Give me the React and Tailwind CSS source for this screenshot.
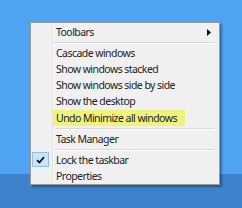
import React from 'react'

function Item({ children, arrow, checked, highlight }) {
  return (
    <div className="relative flex h-4 items-center">
      {checked && (
        <div className="absolute left-[1px] top-0 flex h-[15px] w-[17px] items-center justify-center border border-[#8fc0ea] bg-[#cde3f6]">
          <svg width="9" height="8" viewBox="0 0 9 8">
            <path d="M1 4.2 L3.4 6.5 L8 1.2" fill="none" stroke="#111" strokeWidth="1.8" />
          </svg>
        </div>
      )}
      <span
        className={
          highlight
            ? 'ml-[22px] pl-[3px] pr-[8px] bg-[#f1f27a] leading-[16px]'
            : 'ml-[25px] leading-[16px]'
        }
      >
        {children}
      </span>
      {arrow && (
        <svg className="absolute right-[8px] top-[5px]" width="4" height="7" viewBox="0 0 4 7">
          <path d="M0 0 L4 3.5 L0 7 Z" fill="#111" />
        </svg>
      )}
    </div>
  )
}

function Sep() {
  return (
    <div className="h-[5px] pl-[23px] pr-[4px] pt-[2px]">
      <div className="h-px bg-[#d9d9d9]" />
      <div className="h-px bg-white" />
    </div>
  )
}

export default function App() {
  return (
    <div className="relative flex h-[208px] w-[242px] flex-col overflow-hidden bg-[#4fa3f2] font-['Noto_Sans',sans-serif]">
      <div className="mt-auto h-[34px] bg-[#3d82cb]" />
      <div className="absolute left-[30px] top-[22px] w-[190px] border border-[#9a9a9a] bg-[#f0f0f0] pt-px pb-0 text-[10.5px] tracking-[-0.55px] text-[#222] shadow-[2px_2px_2px_rgba(0,0,0,0.35)]">
        <div className="absolute bottom-0 left-[21px] top-0 w-px bg-[#e2e2e2]" />
        <div className="absolute bottom-0 left-[22px] top-0 w-px bg-white" />
        <Item arrow>Toolbars</Item>
        <Sep />
        <Item>Cascade windows</Item>
        <Item>Show windows stacked</Item>
        <Item>Show windows side by side</Item>
        <Item>Show the desktop</Item>
        <div className="h-px" />
        <Item highlight>Undo Minimize all windows</Item>
        <Sep />
        <Item>Task Manager</Item>
        <Sep />
        <Item checked>Lock the taskbar</Item>
        <Item>Properties</Item>
      </div>
    </div>
  )
}
